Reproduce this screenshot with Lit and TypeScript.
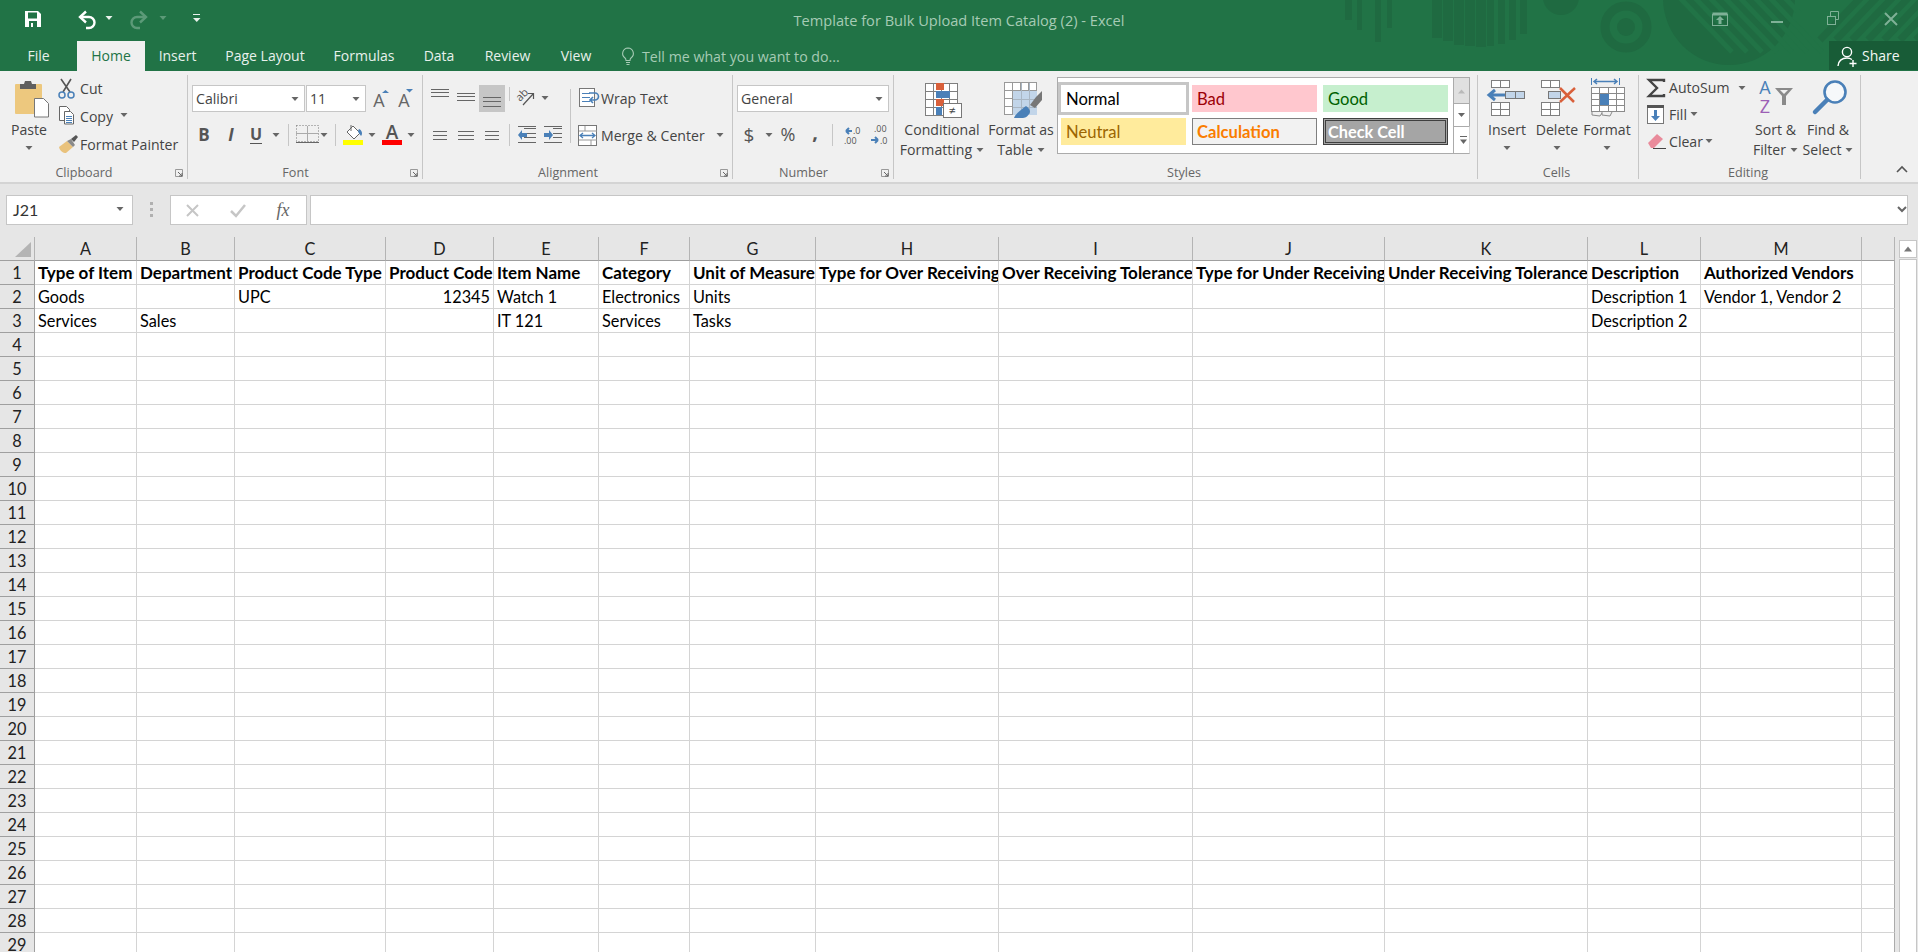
import { LitElement, html, css, svg } from "lit";
import { customElement } from "lit/decorators.js";

const G = "#666";
const BL = "#4a80b8";
const ic = (w: number, h: number, body: unknown) =>
  html`<svg class="ic" width=${w} height=${h} viewBox="0 0 ${w} ${h}">${body}</svg>`;
const tri = (cx: number, cy: number, c = G) =>
  svg`<path d="M${cx - 3.5} ${cy - 2}h7l-3.5 4z" fill=${c}/>`;
const car = (w: number, h = 26) => ic(w, h, tri(w / 2, h / 2));
const hl = (x1: number, x2: number, ys: number[], c = "#666") =>
  ys.map((y) => svg`<rect x=${x1} y=${y} width=${x2 - x1} height="1" fill=${c}/>`);
const sep = (w: number, x: number, y1 = 2, y2 = 24) =>
  ic(w, 26, svg`<rect x=${x} y=${y1} width="1" height=${y2 - y1} fill="#c6c6c6"/>`);
const grid = (x: number, y: number, w: number, h: number, cols: number, rows: number, c = "#7f7f7f") => {
  const out: unknown[] = [svg`<rect x=${x + 0.5} y=${y + 0.5} width=${w} height=${h} fill="#fff" stroke=${c}/>`];
  for (let i = 1; i < cols; i++) out.push(svg`<rect x=${x + Math.round((w * i) / cols)} y=${y} width="1" height=${h} fill=${c}/>`);
  for (let i = 1; i < rows; i++) out.push(svg`<rect x=${x} y=${y + Math.round((h * i) / rows)} width=${w} height="1" fill=${c}/>`);
  return out;
};

const COLS = ["A", "B", "C", "D", "E", "F", "G", "H", "I", "J", "K", "L", "M", ""];
const DATA: Record<number, string[]> = {
  1: ["Type of Item", "Department", "Product Code Type", "Product Code", "Item Name", "Category", "Unit of Measure", "Type for Over Receiving", "Over Receiving Tolerance", "Type for Under Receiving", "Under Receiving Tolerance", "Description", "Authorized Vendors", ""],
  2: ["Goods", "", "UPC", "12345", "Watch 1", "Electronics", "Units", "", "", "", "", "Description 1", "Vendor 1, Vendor 2", ""],
  3: ["Services", "Sales", "", "", "IT 121", "Services", "Tasks", "", "", "", "", "Description 2", "", ""],
};

@customElement("app-root")
export class AppRoot extends LitElement {
  static styles = css`
    :host { display: block; width: 1918px; height: 952px; overflow: hidden; background: #e6e6e6; font-family: "Open Sans", "Noto Sans", sans-serif; font-size: 14.1px; color: #444; }
    * { box-sizing: border-box; }
    .ic { display: block; flex: none; overflow: visible; }
    svg text { font-family: "Open Sans", "Noto Sans", sans-serif; }
    .head { position: relative; height: 71px; background: #217346; color: #fff; overflow: hidden; }
    .deco { position: absolute; left: 0; top: 0; pointer-events: none; overflow: hidden; }
    .titlerow { position: relative; height: 41px; display: grid; grid-template-columns: 1fr auto 1fr; align-items: center; }
    .qat { display: flex; align-items: center; padding-left: 23px; padding-bottom: 3px; }
    .title { font-size: 14.6px; color: #a6cbb5; padding-bottom: 1px; }
    .win { display: flex; justify-content: flex-end; padding-bottom: 3px; }
    .tabs { position: relative; height: 30px; display: flex; }
    .tabgrid { display: grid; grid-template-columns: 77px 68px 65px 110px 88px 62px 75px 62px; height: 30px; }
    .tab { display: flex; align-items: center; justify-content: center; font-size: 14px; color: #e8f1ec; padding-bottom: 1px; }
    .tab.on { background: #f0f0f0; color: #217346; }
    .tell { display: flex; align-items: center; gap: 6px; padding-left: 13px; color: #a6cbb5; font-size: 14.2px; }
    .share { margin-left: auto; width: 89px; height: 29px; background: #185c37; display: flex; align-items: center; gap: 2px; padding-left: 7px; font-size: 14px; color: #f4f8f5; }
    .ribbon { height: 113px; padding-top: 4px; background: #f0f0f0; border-bottom: 2px solid #d4d4d4; display: flex; }
    .group { height: 104px; flex: none; display: flex; flex-direction: column; border-right: 1px solid #c6c6c6; }
    .body { height: 91px; display: flex; flex: none; }
    .lab { display: flex; align-items: center; height: 13px; font-size: 12.6px; line-height: 13px; color: #666; padding-right: 3px; }
    .lab > span { flex: 1; text-align: center; }
    .lab > svg { margin-left: 6px; }
    .g1 { width: 188px; } .g2 { width: 235px; } .g3 { width: 310px; } .g4 { width: 161px; } .g5 { width: 584px; } .g6 { width: 161px; } .g7 { width: 222px; }
    .g1 .body { padding-left: 9px; }
    .g6 .body { padding-left: 4px; }
    .big { display: flex; flex-direction: column; align-items: center; flex: none; }
    .big .ln { height: 20px; line-height: 20px; white-space: nowrap; display: flex; align-items: center; gap: 4px; }
    .big .up { margin-top: 2px; }
    .big .ctr { margin-top: 5px; }
    .paste { width: 40px; }
    .small { margin: -1px 0 0 8px; display: flex; flex-direction: column; }
    .srow { display: flex; align-items: center; height: 28px; white-space: nowrap; }
    .srow.t27 { height: 27px; }
    .stack { padding-top: 10px; display: flex; flex-direction: column; }
    .row { display: flex; align-items: center; height: 27px; }
    .row2 { display: flex; align-items: center; height: 26px; margin-top: 10px; }
    .g2 .body { padding-left: 4px; }
    .sel { height: 27px; background: #fff; border: 1px solid #c6c6c6; display: flex; align-items: center; justify-content: space-between; padding: 0 5px 0 3px; color: #444; }
    .sel.font { width: 113px; } .sel.size { width: 60px; margin-left: 1px; }
    .sel.num { width: 152px; }
    .gray { background: #c6c6c6; }
    .leftc { width: 147px; flex: none; }
    .vsep { width: 1px; height: 54px; background: #c6c6c6; margin-top: 14px; flex: none; }
    .rightc { padding-top: 10px; }
    .rightc .row2 { margin-top: 10px; }
    .mc { width: 106px; white-space: nowrap; }
    .g4 .body { padding-left: 4px; }
    .g5 .body { padding-left: 4px; }
    .cf { width: 88px; } .ft { width: 70px; margin-right: 1px; }
    .gal { margin-top: 2px; width: 396px; height: 77px; background: #fff; border: 1px solid #ababab; border-right: none; display: grid; grid-template-columns: repeat(3, 125px); grid-auto-rows: 27px; gap: 6px; padding: 7px 0 0 3px; }
    .st { font-family: "Lato", "Noto Sans", sans-serif; font-size: 16.6px; display: flex; align-items: center; padding-left: 5px; white-space: nowrap; }
    .normal { background: #fff; color: #000; box-shadow: 0 0 0 3px #c6c6c6; }
    .bad { background: #ffc7ce; color: #9c0006; }
    .good { background: #c6efce; color: #006100; }
    .neutral { background: #ffeb9c; color: #9c6500; }
    .calc { background: #f2f2f2; color: #fa7d00; font-weight: 700; font-size: 16.6px; border: 1px solid #7f7f7f; padding-left: 4px; }
    .check { background: #a5a5a5; color: #fff; font-weight: 700; font-size: 16.3px; border: 3px double #3f3f3f; padding-left: 2px; }
    .gscroll { margin-top: 2px; width: 17px; display: flex; flex-direction: column; flex: none; }
    .sb { border: 1px solid #ababab; border-bottom: none; background: #fff; display: flex; align-items: center; justify-content: center; }
    .sb.a { height: 26px; background: #e0e0e0; } .sb.b { height: 23px; } .sb.c { height: 28px; border-bottom: 1px solid #ababab; }
    .cellc { width: 50px; }
    .g7 .body { padding: 0; }
    .ledit { width: 111px; flex: none; margin-top: -1px; }
    .as { width: 61px; }
    .sortc { width: 51px; } .findc { width: 54px; }
    .collapse { flex: 1; display: flex; align-items: flex-end; justify-content: flex-end; padding: 0 9px 4px 0; height: 103px; }
    .fbar { height: 53px; padding: 11px 0 0 6px; display: flex; align-items: flex-start; }
    .fb { height: 30px; background: #fff; border: 1px solid #c6c6c6; display: flex; align-items: center; flex: none; }
    .name { width: 127px; justify-content: space-between; padding: 0 8px 2px 6px; font-family: "Lato", sans-serif; font-size: 16px; color: #333; }
    .grip { width: 37px; flex: none; display: flex; justify-content: center; padding-top: 7px; }
    .fx { width: 137px; }
    .input { width: 1598px; margin-left: 3px; justify-content: flex-end; padding-right: 1px; }
    .area { display: flex; align-items: flex-start; height: 715px; overflow: hidden; }
    .sheet { display: grid; grid-template-columns: 35px 102px 98px 151px 108px 105px 91px 126px 183px 194px 192px 203px 113px 161px 33px; grid-auto-rows: 24px; flex: none; }
    .c { background: #fff; border-right: 1px solid #d4d4d4; border-bottom: 1px solid #d4d4d4; font-family: "Lato", sans-serif; font-size: 16.3px; color: #000; line-height: 23px; padding-left: 3px; white-space: nowrap; overflow: hidden; }
    .c.b { font-weight: 700; font-size: 17px; }
    .c.r { text-align: right; padding-right: 3px; padding-left: 0; }
    .c.end { border-right-color: #ababab; }
    .ch, .rh { background: #e6e6e6; font-family: "Lato", sans-serif; font-size: 16.3px; color: #222; text-align: center; line-height: 23px; border-right: 1px solid #b4b4b4; border-bottom: 1px solid #9f9f9f; }
    .rh { border-right-color: #9f9f9f; }
    .vs { margin-left: 4px; margin-top: 3px; width: 18px; flex: none; }
    .vs .u { height: 18px; background: #fff; border: 1px solid #c6c6c6; display: flex; align-items: center; justify-content: center; }
    .vs .t { margin-top: 1px; height: 700px; background: #fff; border: 1px solid #c6c6c6; }
  `;

  private deco() {
    const d = "#1f6a41";
    const bars = [[1345, 7, 20], [1357, 5, 30], [1375, 6, 42], [1387, 5, 28]];
    const half = [0, 1, 2, 3, 4, 5, 6, 7, 8].map((i) => 1432 + i * 11);
    const stripes = [0, 1, 2, 3, 4, 5, 6, 7].map((i) => 1680 + i * 15);
    const tr = [0, 1, 2, 3, 4, 5, 6].map((i) => 1820 + i * 16);
    return html`<svg class="deco" width="1918" height="71" viewBox="0 0 1918 71">
      ${bars.map((b) => svg`<rect x=${b[0]} y="0" width=${b[1]} height=${b[2]} fill=${d}/>`)}
      ${half.map((x, i) => svg`<rect x=${x} y="0" width=${i < 5 ? 10 : 7} height=${[38, 41, 45, 46, 47, 46, 44, 40, 34][i]} fill=${d}/>`)}
      <circle cx="1561" cy="-3" r="18" fill=${d}/>
      <circle cx="1626" cy="27" r="21" fill="none" stroke=${d} stroke-width="9"/>
      <circle cx="1626" cy="27" r="9" fill=${d}/>
      <ellipse cx="1729" cy="-2" rx="66" ry="67" fill=${d}/>
      ${stripes.map((x) => svg`<path d="M${x} -2 L${x + 52} 52" stroke="#217346" stroke-width="5"/>`)}
      ${tr.map((x) => svg`<path d="M${x} 40 L${x + 42} -4" stroke=${d} stroke-width="7"/>`)}
    </svg>`;
  }

  private qat() {
    return html`<div class="qat">
      ${ic(54, 20, svg`<path d="M2 2h13l3 3v13H2z" fill="#fff"/><rect x="5" y="3.5" width="9" height="6" fill="#217346"/><rect x="6" y="12" width="8" height="6" fill="#217346"/><rect x="8" y="14" width="2" height="4" fill="#fff"/>`)}
      ${ic(22, 20, svg`<path d="M3 8h9a5.5 5.5 0 0 1 0 11h-3" fill="none" stroke="#fff" stroke-width="2.4"/><path d="M9 2.5L3 8l6 5.5" fill="none" stroke="#fff" stroke-width="2.4"/>`)}
      ${ic(20, 20, tri(10, 9, "#e9f2ec"))}
      ${ic(32, 20, svg`<path d="M27 8h-9a5.5 5.5 0 0 0 0 11h3" fill="none" stroke="#5c9a78" stroke-width="2.4"/><path d="M21 2.5L27 8l-6 5.5" fill="none" stroke="#5c9a78" stroke-width="2.4"/>`)}
      ${ic(20, 20, tri(12, 9, "#5c9a78"))}
      ${ic(40, 20, svg`<rect x="22" y="5" width="7" height="1" fill="#e9f2ec"/><path d="M22 9h7.5l-3.75 4z" fill="#e9f2ec"/>`)}
    </div>`;
  }

  private win() {
    const c = "#7fb197";
    return html`<div class="win">
      ${ic(37, 30, svg`<g transform="translate(0 -1)"><rect x="2.5" y="11.5" width="15" height="11" fill="none" stroke=${c}/><rect x="2.5" y="9.5" width="15" height="3" fill=${c}/><path d="M10 13l-4 4h2.5v4h3v-4H14z" fill=${c}/></g>`)}
      ${ic(58, 30, svg`<rect x="24" y="17" width="12" height="2" fill=${c}/>`)}
      ${ic(56, 30, svg`<g transform="translate(12 -3)"><rect x="10.5" y="15.5" width="8" height="8" fill="none" stroke=${c}/><path d="M13.5 15v-4.5h8v8h-3" fill="none" stroke=${c}/></g>`)}
      ${ic(57, 30, svg`<path d="M24 9l12 12M36 9L24 21" stroke=${c} stroke-width="2"/>`)}
    </div>`;
  }

  private clipboard() {
    return html`<div class="group g1"><div class="body">
      <div class="big paste">
        ${ic(40, 43, svg`<rect x="6" y="9" width="27" height="30" rx="1" fill="#edc87e"/><path d="M11 14v-5h4l1-3h6l1 3h4v5z" fill="#5f5f5f"/><path d="M25.5 23.5h9l5 5v13.5h-14z" fill="#fff" stroke="#777"/>`)}
        <div class="ln up">Paste</div>
        <div class="ctr">${ic(10, 6, tri(5, 3))}</div>
      </div>
      <div class="small">
        <div class="srow">${ic(23, 28, svg`<g transform="translate(0 3)"><path d="M6 15L14 2M13 15L4 2" stroke="#555" stroke-width="1.6" fill="none"/><circle cx="5" cy="18" r="3" fill="none" stroke=${BL} stroke-width="1.5"/><circle cx="14" cy="18" r="3" fill="none" stroke=${BL} stroke-width="1.5"/></g>`)}Cut</div>
        <div class="srow">${ic(23, 28, svg`<path d="M2.5 4.5h7l3 3v11h-10z" fill="#fff" stroke="#666"/><path d="M7.5 9.5h6l3 3v9.5h-9z" fill="#fff" stroke="#666"/>${hl(9, 15, [14, 16, 18, 20], BL)}`)}<span>Copy</span>${ic(22, 28, tri(11, 13))}</div>
        <div class="srow">${ic(23, 28, svg`<g transform="translate(0 2)"><path d="M2 15l8-6 6 6-7 6c-3 0-6-2-7-6z" fill="#e9c27c"/><path d="M10 9l4-2 4 6-2 2z" fill="#8a8a8a"/><path d="M14 7l5-4 2 2-4 5z" fill="#555"/></g>`)}Format Painter</div>
      </div>
    </div><div class="lab"><span>Clipboard</span>${this.exp()}</div></div>`;
  }

  private exp() {
    return ic(10, 10, svg`<path d="M1.5 1.5h7v7h-7z" fill="none" stroke="#999"/><path d="M4 4l4 4M8 5v3H5" fill="none" stroke="#666"/>`);
  }

  private font() {
    return html`<div class="group g2"><div class="body"><div class="stack">
      <div class="row">
        <div class="sel font"><span>Calibri</span>${ic(8, 6, tri(4, 3))}</div>
        <div class="sel size"><span>11</span>${ic(8, 6, tri(4, 3))}</div>
        ${ic(26, 27, svg`<text x="13" y="22" font-size="18" fill="#666" text-anchor="middle">A</text><path d="M16 8l3.5-3 3.5 3z" fill=${BL}/>`)}
        ${ic(24, 27, svg`<text x="12" y="22" font-size="18" fill="#666" text-anchor="middle">A</text><path d="M14 4h7l-3.5 3.5z" fill=${BL}/>`)}
      </div>
      <div class="row2">
        ${ic(24, 26, svg`<text x="12" y="19" font-size="17" font-weight="700" fill="#555" text-anchor="middle">B</text>`)}
        ${ic(30, 26, svg`<text x="15" y="19" font-size="17" font-weight="700" font-style="italic" fill="#555" text-anchor="middle">I</text>`)}
        ${ic(20, 26, svg`<text x="10" y="18" font-size="16" font-weight="700" fill="#555" text-anchor="middle">U</text><rect x="4" y="21" width="12" height="1" fill="#555"/>`)}
        ${car(20)}
        ${sep(4, 2)}
        ${ic(30, 26, svg`<path d="M6.5 3.5h22v16h-22z" fill="none" stroke="#777" stroke-dasharray="1 2"/><rect x="6" y="11" width="23" height="1" fill="#aaa"/><rect x="17" y="4" width="1" height="16" fill="#aaa"/><rect x="6" y="20" width="23" height="1" fill="#666"/>`)}
        ${car(8)}
        ${sep(12, 7)}
        ${ic(27, 26, svg`<path d="M7 10l6-6 7 7-6 6z" fill="#fff" stroke="#666"/><path d="M11 3v6" stroke="#666"/><path d="M19 7c3 1 4 5 2 7-1-2-3-3-3-5z" fill=${BL}/><rect x="3" y="18" width="20" height="5" fill="#ff0"/>`)}
        ${car(10)}
        ${ic(29, 26, svg`<text x="15" y="17" font-size="19" font-weight="600" fill="#555" text-anchor="middle">A</text><rect x="5" y="18" width="20" height="5" fill="#f00"/>`)}
        ${car(10)}
      </div>
    </div></div><div class="lab"><span>Font</span>${this.exp()}</div></div>`;
  }

  private align() {
    const blue = (flip: boolean) => (flip
      ? svg`<path d="M4 9h5V6l4 5-4 5v-3H4z" fill=${BL}/>`
      : svg`<path d="M13 9H8V6l-4 5 4 5v-3h5z" fill=${BL}/>`);
    return html`<div class="group g3"><div class="body">
      <div class="leftc stack">
        <div class="row">
          ${ic(30, 27, hl(8, 26, [4, 7, 11]))}
          ${ic(26, 27, hl(4, 22, [8, 11, 15]))}
          <div class="gray">${ic(26, 27, hl(4, 22, [12, 16, 21]))}</div>
          ${ic(8, 27, svg`<rect x="4" y="2" width="1" height="14" fill="#c6c6c6"/>`)}
          ${ic(27, 27, svg`<text x="0" y="0" font-size="11" fill="#555" transform="translate(7 17) rotate(-45)">ab</text><path d="M10 20L20 9M15 8.5h5.5v5.5" fill="none" stroke="#555" stroke-width="1.2"/>`)}
          ${ic(10, 27, tri(5, 13))}
        </div>
        <div class="row2">
          ${ic(30, 26, hl(10, 24, [9, 13, 17]))}
          ${ic(26, 26, hl(5, 21, [9, 13, 17]))}
          ${ic(26, 26, hl(6, 20, [9, 13, 17]))}
          ${sep(8, 4)}
          ${ic(27, 26, svg`${hl(11, 23, [6, 11, 15], "#666")}<rect x="5" y="20" width="18" height="1" fill="#666"/><rect x="5" y="4" width="18" height="1" fill="#666"/><g transform="translate(1 2)">${blue(false)}</g>`)}
          ${ic(26, 26, svg`${hl(13, 22, [6, 11, 15], "#666")}<rect x="4" y="20" width="18" height="1" fill="#666"/><rect x="4" y="4" width="18" height="1" fill="#666"/><g transform="translate(0 2)">${blue(true)}</g>`)}
        </div>
      </div>
      <div class="vsep"></div>
      <div class="rightc">
        <div class="row">${ic(30, 27, svg`<rect x="8.5" y="3.5" width="15" height="18" fill="#fff" stroke="#777"/>${hl(11, 19, [8, 12, 16], BL)}<path d="M18 8h6a3 3 0 0 1 0 7h-4M22 12l-3 3 3 3" fill="none" stroke=${BL} stroke-width="1.6"/>`)}<span>Wrap Text</span></div>
        <div class="row2">${ic(30, 26, svg`<rect x="7.5" y="3.5" width="18" height="20" fill="#fff" stroke="#777"/><path d="M8 9h18M8 18h18M14 4v5M20 18v5" stroke="#999"/><path d="M10 13.5h13M12 11l-3 2.5 3 2.5M21 11l3 2.5-3 2.5" fill="none" stroke=${BL} stroke-width="1.3"/>`)}<span class="mc">Merge &amp; Center</span>${car(26)}</div>
      </div>
    </div><div class="lab"><span>Alignment</span>${this.exp()}</div></div>`;
  }

  private number() {
    return html`<div class="group g4"><div class="body"><div class="stack">
      <div class="row"><div class="sel num"><span>General</span>${ic(8, 6, tri(4, 3))}</div></div>
      <div class="row2">
        ${ic(24, 26, svg`<text x="12" y="20" font-size="19" fill="#555" text-anchor="middle">$</text>`)}
        ${car(16)}
        ${ic(22, 26, svg`<text x="11" y="19" font-size="18" fill="#555" text-anchor="middle">%</text>`)}
        ${ic(32, 26, svg`<text x="16" y="17" font-size="20" font-weight="700" fill="#555" text-anchor="middle">,</text>`)}
        ${sep(2, 1)}
        ${ic(34, 26, svg`<path d="M13 9h6M13 9l3-3M13 9l3 3" stroke=${BL} stroke-width="2" fill="none"/><text x="20" y="12" font-size="9" fill="#555">.0</text><text x="11" y="22" font-size="9" fill="#555">.00</text>`)}
        ${ic(26, 26, svg`<text x="7" y="10" font-size="9" fill="#555">.00</text><path d="M3 18h7M10 18l-3-3M10 18l-3 3" stroke=${BL} stroke-width="2" fill="none" transform="translate(1 0)"/><text x="13" y="22" font-size="9" fill="#555">.0</text>`)}
      </div>
    </div></div><div class="lab"><span>Number</span>${this.exp()}</div></div>`;
  }

  private styles_() {
    return html`<div class="group g5"><div class="body">
      <div class="big cf">
        ${ic(88, 43, svg`${grid(27, 8, 32, 32, 4, 4)}<rect x="38" y="8" width="8" height="7" fill="#d9603b"/><rect x="38" y="16" width="14" height="7" fill=${BL}/><rect x="38" y="24" width="8" height="7" fill="#d9603b"/><rect x="38" y="32" width="6" height="8" fill=${BL}/><rect x="45.5" y="28.5" width="18" height="14" fill="#fff" stroke="#777"/><text x="54.5" y="40" font-size="12" fill="#444" text-anchor="middle">≠</text>`)}
        <div class="ln up">Conditional</div>
        <div class="ln">Formatting ${ic(8, 6, tri(4, 3))}</div>
      </div>
      <div class="big ft">
        ${ic(70, 43, svg`${grid(18, 7, 32, 32, 4, 4, "#999")}<rect x="27" y="16" width="24" height="24" fill="#c2d5e9"/>${[35, 43].map((x) => svg`<rect x=${x} y="8" width="1" height="31" fill="#a9b6c3"/>`)}${[24, 32].map((y) => svg`<rect x="27" y=${y} width="24" height="1" fill="#a9b6c3"/>`)}<path d="M28 43c1-4 8-9 12-12 3 2 4 4 4 6 -1 3-4 6-7 6z" fill=${BL}/><path d="M44 30l6-8 6-6v9l-7 8z" fill="#777"/>`)}
        <div class="ln up">Format as</div>
        <div class="ln">Table ${ic(8, 6, tri(4, 3))}</div>
      </div>
      <div class="gal">
        <div class="st normal">Normal</div><div class="st bad">Bad</div><div class="st good">Good</div>
        <div class="st neutral">Neutral</div><div class="st calc">Calculation</div><div class="st check">Check Cell</div>
      </div>
      <div class="gscroll">
        <div class="sb a">${ic(9, 6, svg`<path d="M1 5.5l3.5-4 3.5 4z" fill="#b9b9b9"/>`)}</div>
        <div class="sb b">${ic(9, 6, tri(4.5, 3))}</div>
        <div class="sb c">${ic(9, 10, svg`<rect x="1" y="1" width="7" height="1" fill="#666"/><path d="M1 4.5h7l-3.5 4.5z" fill="#666"/>`)}</div>
      </div>
    </div><div class="lab"><span>Styles</span></div></div>`;
  }

  private cells() {
    const two = (x: number, y: number) => grid(x, y, 18, 7, 2, 1);
    return html`<div class="group g6"><div class="body">
      <div class="big cellc">
        ${ic(50, 43, svg`${two(9, 5)}<path d="M24 20H8M13 15l-6 5 6 5" fill="none" stroke=${BL} stroke-width="3"/><rect x="23.5" y="16.5" width="19" height="7" fill="#c2d5e9" stroke="#777"/><rect x="33" y="17" width="1" height="7" fill="#777"/>${grid(9, 27, 18, 13, 2, 2)}`)}
        <div class="ln up">Insert</div>
        <div class="ctr">${ic(10, 6, tri(5, 3))}</div>
      </div>
      <div class="big cellc">
        ${ic(50, 43, svg`${two(9, 5)}<rect x="16.5" y="16.5" width="12" height="7" fill="#c2d5e9" stroke="#777"/>${grid(9, 27, 18, 13, 2, 2)}<path d="M28 13l14 14M43 13L28 27" stroke="#d9603b" stroke-width="2.5" fill="none"/>`)}
        <div class="ln up">Delete</div>
        <div class="ctr">${ic(10, 6, tri(5, 3))}</div>
      </div>
      <div class="big cellc">
        ${ic(50, 43, svg`<rect x="9" y="3" width="1" height="7" fill=${BL}/><rect x="37" y="3" width="1" height="7" fill=${BL}/><path d="M12 6.5h23M15 4l-3 2.5 3 2.5M32 4l3 2.5-3 2.5" fill="none" stroke=${BL} stroke-width="1.5"/>${grid(9, 12, 33, 24, 4, 4, "#8a8a8a")}<rect x="18" y="19" width="9" height="11" fill=${BL}/><path d="M10 37v3l8 1 2-3M20 37v3l8 1 2-4" fill="none" stroke="#8a8a8a"/>`)}
        <div class="ln up">Format</div>
        <div class="ctr">${ic(10, 6, tri(5, 3))}</div>
      </div>
    </div><div class="lab"><span>Cells</span></div></div>`;
  }

  private editing() {
    return html`<div class="group g7"><div class="body">
      <div class="ledit">
        <div class="srow t27">${ic(30, 27, svg`<path d="M25 8V6H10l8 8-8 8h15v-2" fill="none" stroke="#444" stroke-width="2.4"/>`)}<span class="as">AutoSum</span>${car(26)}</div>
        <div class="srow t27">${ic(30, 27, svg`<rect x="8.5" y="4.5" width="16" height="18" fill="#fff" stroke="#777"/><rect x="8" y="4" width="17" height="3" fill="#555"/><path d="M15 9h3v6h3l-4.5 5-4.5-5h3z" fill=${BL}/>`)}<span>Fill</span>${ic(16, 27, tri(7, 13))}</div>
        <div class="srow t27">${ic(30, 27, svg`<path d="M9 15l9-9 6 5-9 9h-3z" fill="#e98b9b"/><rect x="14" y="20" width="13" height="1" fill="#444"/>`)}<span>Clear</span>${ic(16, 27, tri(6, 13))}</div>
      </div>
      <div class="big sortc">
        ${ic(51, 43, svg`<text x="15" y="19" font-size="18" fill=${BL} text-anchor="middle">A</text><text x="15" y="38" font-size="18" fill="#9c5fb5" text-anchor="middle">Z</text><path d="M25 13h18l-7 8v9h-4v-9z" fill="#8a8a8a"/><path d="M30 15h8l-4 4z" fill="#f0f0f0"/>`)}
        <div class="ln up">Sort &amp;</div>
        <div class="ln">Filter ${ic(8, 6, tri(4, 3))}</div>
      </div>
      <div class="big findc">
        ${ic(54, 43, svg`<circle cx="34" cy="17" r="10.5" fill="#f6f8fa" stroke=${BL} stroke-width="2.6"/><path d="M26 25L14 37" stroke=${BL} stroke-width="4.5" stroke-linecap="round"/>`)}
        <div class="ln up">Find &amp;</div>
        <div class="ln">Select ${ic(8, 6, tri(4, 3))}</div>
      </div>
    </div><div class="lab"><span>Editing</span></div></div>`;
  }

  private grid() {
    const rows = Array.from({ length: 29 }, (_, i) => i + 1);
    return html`<div class="sheet">
      <div class="ch">${ic(35, 23, svg`<path d="M31 5v15H15z" fill="#b4b4b4"/>`)}</div>
      ${COLS.map((c) => html`<div class="ch">${c}</div>`)}
      ${rows.map((r) => html`<div class="rh">${r}</div>
        ${COLS.map((_, i) => {
          const v = DATA[r]?.[i] ?? "";
          const cls = `c ${r === 1 ? "b" : ""} ${v === "12345" ? "r" : ""} ${i === 13 ? "end" : ""}`;
          return html`<div class=${cls}>${v}</div>`;
        })}`)}
    </div>`;
  }

  render() {
    return html`
      <div class="head">
        ${this.deco()}
        <div class="titlerow">
          ${this.qat()}
          <div class="title">Template for Bulk Upload Item Catalog (2) - Excel</div>
          ${this.win()}
        </div>
        <div class="tabs">
          <div class="tabgrid">
            ${["File", "Home", "Insert", "Page Layout", "Formulas", "Data", "Review", "View"].map((t) => html`<div class="tab ${t === "Home" ? "on" : ""}">${t}</div>`)}
          </div>
          <div class="tell">
            ${ic(16, 20, svg`<path d="M8 2a5.5 5.5 0 0 0-3 10c.6.5 1 1.3 1 2.5h4c0-1.2.4-2 1-2.5A5.5 5.5 0 0 0 8 2zM6 16.5h4M6.5 18.5h3" fill="none" stroke="#a6cbb5" stroke-width="1.1"/>`)}
            <span>Tell me what you want to do...</span>
          </div>
          <div class="share">
            ${ic(24, 24, svg`<circle cx="11" cy="8" r="4.6" fill="none" stroke="#fff" stroke-width="1.4"/><path d="M2 22c0-5 4-8 9-8 2 0 3.5.5 5 1.5" fill="none" stroke="#fff" stroke-width="1.4"/><path d="M17 16v7M13.5 19.5h7" stroke="#fff" stroke-width="1.4"/>`)}
            <span>Share</span>
          </div>
        </div>
      </div>
      <div class="ribbon">
        ${this.clipboard()}${this.font()}${this.align()}${this.number()}${this.styles_()}${this.cells()}${this.editing()}
        <div class="collapse">${ic(14, 10, svg`<path d="M2 8l5-5 5 5" fill="none" stroke="#555" stroke-width="1.6"/>`)}</div>
      </div>
      <div class="fbar">
        <div class="fb name"><span>J21</span>${ic(8, 6, tri(4, 3))}</div>
        <div class="grip">${ic(4, 16, svg`<rect y="0" width="3" height="3" fill="#b0b0b0"/><rect y="6" width="3" height="3" fill="#b0b0b0"/><rect y="12" width="3" height="3" fill="#b0b0b0"/>`)}</div>
        <div class="fb fx">
          ${ic(45, 28, svg`<path d="M16 9l11 11M27 9L16 20" stroke="#c6c6c6" stroke-width="2"/>`)}
          ${ic(45, 28, svg`<path d="M15 15l5 5 9-11" fill="none" stroke="#c6c6c6" stroke-width="2.5"/>`)}
          ${ic(42, 28, svg`<text x="22" y="20" font-size="18" font-style="italic" fill="#666" style="font-family:'Liberation Serif',serif" text-anchor="middle">fx</text>`)}
        </div>
        <div class="fb input">${ic(14, 10, svg`<path d="M6 2l4 4 4-4" fill="none" stroke="#666" stroke-width="2"/>`)}</div>
      </div>
      <div class="area">
        ${this.grid()}
        <div class="vs">
          <div class="u">${ic(10, 6, svg`<path d="M1 5.5l4-5 4 5z" fill="#777"/>`)}</div>
          <div class="t"></div>
        </div>
      </div>
    `;
  }
}
